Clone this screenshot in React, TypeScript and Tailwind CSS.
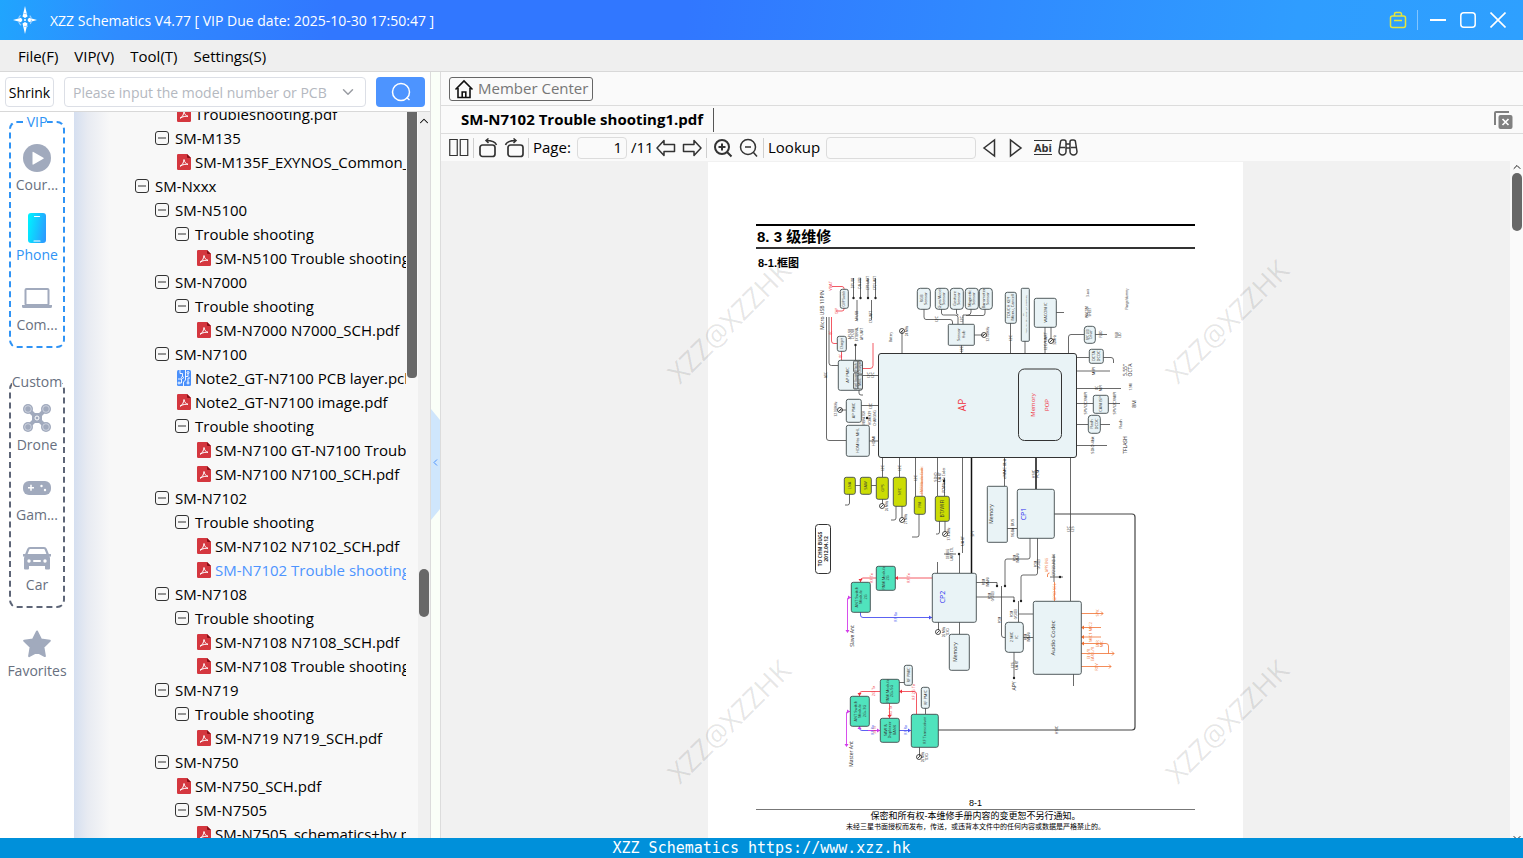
import type { ReactNode } from 'react'
import { ChevronDown, ChevronUp } from 'lucide-react'

type Kind = 'folder' | 'pdf' | 'pcb'

const INDENT = ['pl-[61px]', 'pl-[81px]', 'pl-[101px]', 'pl-[121px]']

const TREE: { depth: number; kind: Kind; label: string; active?: boolean }[] = [
  { depth: 2, kind: 'pdf', label: 'Troubleshooting.pdf' },
  { depth: 1, kind: 'folder', label: 'SM-M135' },
  { depth: 2, kind: 'pdf', label: 'SM-M135F_EXYNOS_Common_SCH.pdf' },
  { depth: 0, kind: 'folder', label: 'SM-Nxxx' },
  { depth: 1, kind: 'folder', label: 'SM-N5100' },
  { depth: 2, kind: 'folder', label: 'Trouble shooting' },
  { depth: 3, kind: 'pdf', label: 'SM-N5100 Trouble shooting.pdf' },
  { depth: 1, kind: 'folder', label: 'SM-N7000' },
  { depth: 2, kind: 'folder', label: 'Trouble shooting' },
  { depth: 3, kind: 'pdf', label: 'SM-N7000 N7000_SCH.pdf' },
  { depth: 1, kind: 'folder', label: 'SM-N7100' },
  { depth: 2, kind: 'pcb', label: 'Note2_GT-N7100 PCB layer.pcb' },
  { depth: 2, kind: 'pdf', label: 'Note2_GT-N7100 image.pdf' },
  { depth: 2, kind: 'folder', label: 'Trouble shooting' },
  { depth: 3, kind: 'pdf', label: 'SM-N7100 GT-N7100 Trouble shooting.pdf' },
  { depth: 3, kind: 'pdf', label: 'SM-N7100 N7100_SCH.pdf' },
  { depth: 1, kind: 'folder', label: 'SM-N7102' },
  { depth: 2, kind: 'folder', label: 'Trouble shooting' },
  { depth: 3, kind: 'pdf', label: 'SM-N7102 N7102_SCH.pdf' },
  { depth: 3, kind: 'pdf', label: 'SM-N7102 Trouble shooting1.pdf', active: true },
  { depth: 1, kind: 'folder', label: 'SM-N7108' },
  { depth: 2, kind: 'folder', label: 'Trouble shooting' },
  { depth: 3, kind: 'pdf', label: 'SM-N7108 N7108_SCH.pdf' },
  { depth: 3, kind: 'pdf', label: 'SM-N7108 Trouble shooting.pdf' },
  { depth: 1, kind: 'folder', label: 'SM-N719' },
  { depth: 2, kind: 'folder', label: 'Trouble shooting' },
  { depth: 3, kind: 'pdf', label: 'SM-N719 N719_SCH.pdf' },
  { depth: 1, kind: 'folder', label: 'SM-N750' },
  { depth: 2, kind: 'pdf', label: 'SM-N750_SCH.pdf' },
  { depth: 2, kind: 'folder', label: 'SM-N7505' },
  { depth: 3, kind: 'pdf', label: 'SM-N7505_schematics+by.pdf' },
]

/* ---------- icons ---------- */

function TreeIcon({ kind }: { kind: Kind }) {
  if (kind === 'folder') {
    return (
      <svg width="14" height="14" viewBox="0 0 14 14" fill="none" stroke="#333">
        <rect x="0.5" y="0.5" width="13" height="13" rx="2.5" />
        <path d="M3 7h8" />
      </svg>
    )
  }
  if (kind === 'pcb') {
    return (
      <svg className="ml-0.5" width="14" height="16" viewBox="0 0 14 16">
        <rect width="14" height="16" rx="1.5" fill="#4a90fb" />
        <g fill="none" stroke="#fff" strokeWidth="0.9">
          <path d="M3 0v3.5h2.5V7M1 9h3.500v4H2M8.500 0v10l-2 2v4M11 2v4.500H8.500M13 8h-2v5" />
          <circle cx="5.500" cy="7.500" r="1" fill="#4a90fb" />
          <circle cx="11" cy="2.500" r="1" fill="#4a90fb" />
          <circle cx="11" cy="13" r="1" fill="#4a90fb" />
          <circle cx="2" cy="13" r="1" fill="#4a90fb" />
        </g>
      </svg>
    )
  }
  return (
    <svg className="ml-0.5" width="14" height="16" viewBox="0 0 14 16">
      <path d="M1.200 0H10l4 4v10.800a1.200 1.200 0 0 1-1.200 1.200H1.200A1.200 1.200 0 0 1 0 14.800V1.200A1.200 1.200 0 0 1 1.200 0z" fill="#d4373f" />
      <path d="M10 0l4 4h-3a1 1 0 0 1-1-1z" fill="#8a0f17" />
      <path d="M3 12.200c1.800-.7 3.800-3.300 4-6.700.5 2.600 1.800 4.400 4 4.800-2.500-.2-5 .1-8 1.900z" fill="none" stroke="#fff" strokeWidth="1" />
    </svg>
  )
}

const PlayIcon = (
  <svg width="28" height="28" viewBox="0 0 28 28">
    <circle cx="14" cy="14" r="14" fill="#a1aabd" />
    <path d="M9.500 8.500v11.500a.6.6 0 0 0 .9.500l10-5.700a.6.6 0 0 0 0-1.100l-10-5.700a.6.6 0 0 0-.9.500z" fill="#fff" />
  </svg>
)

const PhoneIcon = (
  <svg width="18" height="30" viewBox="0 0 18 30">
    <defs>
      <linearGradient id="phone" x1="0" x2="1" y1="0.300" y2="0.600">
        <stop offset="0" stopColor="#00f0ff" />
        <stop offset="1" stopColor="#2b9cff" />
      </linearGradient>
    </defs>
    <rect width="18" height="30" rx="3" fill="url(#phone)" />
    <path d="M6.500 3.500h5M6 28h6" stroke="#fff" strokeWidth="1.200" strokeLinecap="round" />
  </svg>
)

const LaptopIcon = (
  <svg width="30" height="20" viewBox="0 0 30 20">
    <rect x="3.500" y="1" width="23" height="16" rx="1" fill="none" stroke="#a1aabd" strokeWidth="2" />
    <path d="M0 17h12.500v1h5v-1H30v1.500a1.500 1.500 0 0 1-1.500 1.500h-27A1.500 1.500 0 0 1 0 18.500z" fill="#a1aabd" />
  </svg>
)

const DroneIcon = (
  <svg width="28" height="28" viewBox="0 0 28 28">
    <path d="M5 5l18 18M23 5L5 23" stroke="#a1aabd" strokeWidth="4" />
    <rect x="9" y="9" width="10" height="10" rx="2.500" fill="#a1aabd" />
    {[5, 23].map((cx) =>
      [5, 23].map((cy) => (
        <g key={cx * 100 + cy}>
          <circle cx={cx} cy={cy} r="5" fill="#a1aabd" />
          <circle cx={cx} cy={cy} r="3.300" fill="none" stroke="#e8ebf1" strokeWidth="0.600" />
        </g>
      )),
    )}
    <circle cx="14" cy="14" r="2" fill="none" stroke="#fff" />
  </svg>
)

const GamepadIcon = (
  <svg width="28" height="14" viewBox="0 0 28 14">
    <rect width="28" height="14" rx="6" fill="#a1aabd" />
    <path d="M8 3.800v6M5 6.800h6" stroke="#fff" strokeWidth="1.500" />
    <circle cx="18.500" cy="5" r="1.200" fill="#fff" />
    <circle cx="22" cy="9" r="1.200" fill="#fff" />
  </svg>
)

const CarIcon = (
  <svg width="28" height="24" viewBox="0 0 28 24">
    <path d="M7 2h14a2 2 0 0 1 1.800 1.300L25 9H3l2.200-5.700A2 2 0 0 1 7 2z" fill="none" stroke="#a1aabd" strokeWidth="2.200" />
    <path d="M0 8h3l1 1h20l1-1h3v2.500h-1.500L27 12v10.500a1 1 0 0 1-1 1h-3a1 1 0 0 1-1-1V20H6v2.500a1 1 0 0 1-1 1H2a1 1 0 0 1-1-1V12l.5-1.500H0z" fill="#a1aabd" />
    <circle cx="6" cy="15" r="1.700" fill="#fff" />
    <circle cx="22" cy="15" r="1.700" fill="#fff" />
    <rect x="10" y="14" width="8" height="2" rx="1" fill="#fff" />
  </svg>
)

const StarIcon = (
  <svg width="28" height="28" viewBox="0 0 28 28">
    <path d="M14 1.500l4 8 8.800 1.300-6.400 6.300 1.500 9L14 21.800l-7.900 4.300 1.500-9L1.200 10.800 10 9.500z" fill="#a1aabd" stroke="#a1aabd" strokeWidth="2" strokeLinejoin="round" />
  </svg>
)

function SideItem({ icon, label, active }: { icon: ReactNode; label: string; active?: boolean }) {
  return (
    <button type="button" className={`flex h-[70px] w-full flex-col items-center whitespace-nowrap ${active ? 'text-[#2f93f5]' : 'text-[#687080]'}`}>
      <span className="flex h-11 shrink-0 items-center">{icon}</span>
      <span className="text-[14px] leading-[10px]">{label}</span>
    </button>
  )
}

/* Toolbar icon button */
function Tool({ label, children }: { label: string; children: ReactNode }) {
  return (
    <button type="button" aria-label={label} className="flex h-6 w-5 shrink-0 items-center justify-center">
      <svg width="20" height="20" viewBox="0 0 20 20" fill="none" stroke="#333" strokeWidth="1.500">
        {children}
      </svg>
    </button>
  )
}

function Divider() {
  return <span className="h-5 w-px shrink-0 bg-[#cfcfcf]" />
}

/* ---------- block diagram ---------- */

// Vertical label, reads bottom to top
function V({ x, y, s = 4, c = '#333', b, children }: { x: number; y: number; s?: number; c?: string; b?: boolean; children: ReactNode }) {
  return (
    <text transform={`translate(${x} ${y}) rotate(-90)`} fontSize={s} fill={c} fontWeight={b ? 700 : 400} textAnchor="middle" dominantBaseline="central">
      {children}
    </text>
  )
}

const BLUE = '#e9f3f6'
const LIME = '#cbdc04'
const TEAL = '#50e3bd'

// x, y, width, height, fill, radius, text lines, text size
const BLOCKS: [number, number, number, number, string, number, string[], number][] = [
  [840, 289, 8, 19, BLUE, 2, ['OVP Switch'], 4],
  [837, 336, 9, 15, BLUE, 2, ['Charger'], 4],
  [838, 360, 24, 30, BLUE, 2, [], 4],
  [846, 399, 15, 23, BLUE, 2, ['AP PMIC'], 5],
  [846, 425, 23, 31, BLUE, 2, ['HDMI to MHL'], 5],
  [917, 288, 13, 21, BLUE, 3, ['RGB', 'Sensor'], 5],
  [935, 288, 13, 21, BLUE, 3, ['Gyro/Accel', 'Sensor'], 5],
  [950, 288, 13, 21, BLUE, 3, ['Gesture', 'Sensor'], 5],
  [965, 288, 13, 21, BLUE, 3, ['Magnetic', 'Sensor'], 5],
  [979, 288, 13, 21, BLUE, 3, ['Barometer', 'Sensor'], 5],
  [948, 324, 26, 21, BLUE, 1, ['Sensor', 'Hub'], 5],
  [1005, 292, 11, 31, BLUE, 2, ['TOUCH KEY', '(Menu, Cancel)'], 5],
  [1021, 288, 8, 53, BLUE, 1, ['KEY', 'Power, Volume up/down (AP, MAX77686)'], 3],
  [1034, 298, 22, 29, BLUE, 2, ['WACOM IC'], 5],
  [1084, 326, 11, 17, BLUE, 3, ['SPC LED', 'Driver'], 4],
  [1089, 349, 14, 14, BLUE, 2, ['DCTA', 'DCDC'], 5],
  [1093, 395, 15, 18, BLUE, 2, ['CAM ISP'], 5],
  [1088, 415, 12, 18, BLUE, 3, ['Flash', 'DCDC'], 5],
  [844, 477, 11, 17, LIME, 2, ['LNA'], 5],
  [860, 477, 11, 17, LIME, 2, ['SAW'], 5],
  [876, 477, 12, 22, LIME, 2, ['GPS'], 5],
  [893, 477, 13, 29, LIME, 2, ['NFC'], 5],
  [914, 496, 11, 18, LIME, 2, ['FM'], 5],
  [935, 496, 14, 25, LIME, 2, ['BT/WIFI'], 6],
  [987, 486, 20, 56, BLUE, 1, [], 5],
  [1017, 489, 37, 49, BLUE, 2, [], 5],
  [932, 573, 44, 49, BLUE, 2, [], 5],
  [949, 634, 20, 36, BLUE, 2, [], 5],
  [1005, 622, 18, 30, BLUE, 3, ['2 MIC', 'IC'], 5],
  [1033, 601, 48, 73, BLUE, 2, [], 5],
  [876, 566, 19, 24, TEAL, 2, ['PAM Module', '2G'], 5],
  [851, 582, 19, 30, TEAL, 2, ['ANT Switch', 'Module', '2G'], 5],
  [880, 679, 19, 24, TEAL, 2, ['PAM Module', '2G+5G'], 5],
  [850, 696, 19, 30, TEAL, 2, ['ANT Switch', 'Module', '2G+3G'], 5],
  [880, 718, 19, 24, TEAL, 2, ['SAW &', 'Duplexer', 'BANK'], 5],
  [911, 714, 27, 33, TEAL, 2, ['RF Transceiver'], 5],
  [904, 665, 8, 20, BLUE, 2, ['RF PMIC'], 5],
  [921, 687, 8, 21, BLUE, 2, ['RF PMIC'], 5],
]

// loose labels: x, y, text, size, colour
const LABELS: [number, number, string, number, string][] = [
  [822, 310, 'Micro USB 11PIN', 5, '#222'],
  [830, 286, 'VBAT', 4, '#f0303c'],
  [837, 311, 'OVP', 3, '#f0303c'],
  [853, 283, 'DP USB', 3, '#222'],
  [860, 283, 'DN USB', 3, '#222'],
  [868, 283, 'CP1 UART', 3, '#222'],
  [875, 283, 'CP2 UART', 3, '#222'],
  [857, 316, 'AP USB', 3, '#222'],
  [871, 317, 'CP UART', 3, '#222'],
  [850, 334, 'AP USB', 3, '#222'],
  [853, 334, 'CP USB', 3, '#222'],
  [857, 334, 'EXTERNAL', 3, '#222'],
  [862, 334, 'AP UART', 3, '#222'],
  [847, 375, 'AP PMIC', 4, '#333'],
  [831, 333, 'I2C', 3, '#f0303c'],
  [841, 356, 'I2C', 3, '#f0303c'],
  [868, 375, 'I2C', 4, '#222'],
  [872, 375, 'I2C', 4, '#222'],
  [870, 406, 'I2C', 4, '#222'],
  [826, 375, 'ADC', 3, '#222'],
  [836, 409, '32.768KHz', 3, '#222'],
  [864, 418, 'VIBRATOR', 3, '#222'],
  [870, 418, 'HOMEKEY', 3, '#222'],
  [875, 418, 'CHARGING', 3, '#222'],
  [873, 441, 'HDMI', 4, '#222'],
  [891, 337, 'Battery', 3, '#222'],
  [907, 331, '24 MHz', 3, '#222'],
  [936, 319, 'I2C', 4, '#222'],
  [961, 319, 'I2C', 4, '#222'],
  [961, 349, 'I2C', 4, '#222'],
  [988, 334, '32.768KHz', 3, '#222'],
  [1010, 338, 'I2C', 4, '#222'],
  [1045, 341, 'I2C/UART', 4, '#222'],
  [1055, 340, '32MHz', 3, '#222'],
  [1088, 293, '3-axis', 3, '#222'],
  [1087, 312, 'WACOM', 3, '#222'],
  [1090, 312, 'SHEET', 3, '#222'],
  [1127, 299, 'Flange/dummy', 3, '#222'],
  [1101, 334, 'FLED', 3, '#222'],
  [1117, 335, 'RGB', 3, '#222'],
  [1120, 335, 'LED', 3, '#222'],
  [1093, 371, 'MIPI', 4, '#222'],
  [1125, 370, '5.55"', 5, '#222'],
  [1130, 370, 'OCTA', 5, '#222'],
  [1097, 388, 'I2C', 3, '#222'],
  [1101, 388, 'MIPI', 3, '#222'],
  [1131, 387, '1.9M', 3, '#222'],
  [1085, 403, 'SPI/I2C/MIPI', 4, '#222'],
  [1114, 403, 'SPI/I2C/MIPI', 4, '#222'],
  [1134, 404, '8M', 5, '#222'],
  [1120, 424, 'Flash', 4, '#222'],
  [1092, 445, 'SDIO 4bit', 4, '#222'],
  [1125, 445, 'TFLASH', 5, '#222'],
  [882, 468, 'I2C', 4, '#222'],
  [899, 468, 'I2C', 4, '#222'],
  [915, 478, 'I2C', 4, '#222'],
  [922, 480, 'FM RX/Audio Codec', 3, '#e8702a'],
  [935, 477, 'SDIO', 4, '#222'],
  [939, 477, 'UART', 4, '#222'],
  [944, 480, 'PCM/Audio Codec', 3, '#222'],
  [887, 506, '26 MHz', 3, '#222'],
  [906, 519, '27 MHz', 3, '#222'],
  [949, 534, '37.4 MHz', 3, '#222'],
  [962, 541, 'UART', 4, '#222'],
  [972, 534, 'SPI', 4, '#222'],
  [948, 554, 'DEBUG', 3, '#222'],
  [952, 554, 'UART CTL', 3, '#222'],
  [1004, 469, 'eMMC 8bit', 4, '#222'],
  [1033, 474, 'HSIC', 4, '#222'],
  [1037, 474, 'PCM', 4, '#222'],
  [1012, 528, '16Bit BUS', 4, '#222'],
  [1068, 529, 'I2C', 4, '#222'],
  [1072, 529, 'I2S', 4, '#222'],
  [1015, 558, 'PCM', 3, '#222'],
  [1018, 558, '(MAIN)', 3, '#222'],
  [1036, 564, 'PCM', 3, '#222'],
  [1039, 564, '(VOICE)', 3, '#222'],
  [984, 582, 'PCM', 3, '#222'],
  [988, 582, '(MAIN)', 3, '#222'],
  [990, 596, 'PCM', 3, '#222'],
  [993, 596, '(VOICE)', 3, '#222'],
  [1047, 565, 'APPS ENG', 3, '#f07030'],
  [1054, 565, 'CP2 SOUND EN', 3, '#222'],
  [1054, 592, 'GPIO SEL', 4, '#f07030'],
  [1000, 620, 'PCM', 3, '#222'],
  [1012, 614, 'PCM', 3, '#222'],
  [1016, 614, '(VOICE)', 3, '#222'],
  [1026, 637, 'PCM', 3, '#222'],
  [1029, 637, '(MAIN)', 3, '#222'],
  [1012, 665, 'I2S', 4, '#222'],
  [1016, 665, 'UART', 4, '#222'],
  [1014, 686, 'APY', 5, '#222'],
  [1097, 613, 'SPK', 4, '#f07030'],
  [1090, 632, 'MIC1 MIC2', 4, '#f07030'],
  [1097, 644, 'EAR', 4, '#f07030'],
  [1101, 644, 'MIC', 4, '#f07030'],
  [1088, 654, 'EJ L/R', 4, '#f07030'],
  [1092, 654, 'EAR L/R', 4, '#f07030'],
  [1096, 667, 'RCV', 4, '#f07030'],
  [871, 578, 'RF Tx', 4, '#f0303c'],
  [908, 578, 'RF Tx', 4, '#f0303c'],
  [895, 617, 'RF Rx', 4, '#4050f0'],
  [852, 636, 'Slave Ant', 5, '#222'],
  [851, 754, 'Master Ant', 5, '#222'],
  [944, 632, '26 MHz', 3, '#222'],
  [948, 632, 'TCXO', 3, '#222'],
  [873, 691, '2G Tx', 4, '#f0303c'],
  [890, 711, '3G Tx', 4, '#f0303c'],
  [913, 692, 'RF 2G Tx', 4, '#f0303c'],
  [872, 730, 'RF Rx', 4, '#4050f0'],
  [875, 730, '3G Tx', 3, '#f0303c'],
  [905, 730, 'RF Rx', 4, '#4050f0'],
  [923, 757, '26 MHz', 3, '#222'],
  [927, 757, 'TCXO', 3, '#222'],
  [1056, 730, 'HSIC', 4, '#222'],
]

function Diagram() {
  return (
    <svg viewBox="756 272 439 518" className="block w-full" fontFamily="'Open Sans', 'Noto Sans', sans-serif">
      {/* wiring */}
      <g fill="none" stroke="#444" strokeWidth="0.8">
        <path d="M826.500 317V438q0 2.500 2.500 2.500H846M829 317V363q0 2.500 2.500 2.500H838M862 375.500H879M861 405.500H879M869 441H879" />
        <path d="M853.500 278V298M860.500 278V298M868 278V298M875.500 278V298M857 300V320M871.500 300V320M855.500 344V360M840 410H846M859 390V393q0 2 2 2H863" />
        <path d="M902 331V353M924 309V317q0 2.500 2 2.500H950q2.500 0 2.500 2.500V324M941.500 309V313q0 2 2 2H955q3 0 3 2.500V324M956.500 309V313q0 2 2 2M971 309V312q0 3-3 3H963V324M985 309V313q0 2.500-2 2.500H966M961.500 345V353M974 335H984" />
        <path d="M1010.500 323V353M1025 341V353M1045 327V353M1051 327V339M1056 312.500H1064M1068.500 353V337q0-2.500 2.500-2.500H1084M1095 334.500H1107M1077 357.500H1089M1103 357.500H1111q2.500 0 2.500 2.500V363M1077 371H1110M1077 388.500H1121M1077 403.500H1093M1108 403.500H1120M1077 424.500H1088M1100 424.500H1110M1077 445.500H1107" />
        <path d="M882.500 458V477M899.500 458V477M915.500 458V496M937.500 458V496M944.500 478V496M855 485.500H860M871 485.500H876M849.500 494V503q0 2-2 2H845M882.500 499V504M896 506V518q0 2-2 2H891M902 506V518M919 514V535q0 2-2 2H912M939.500 521V532q0 2-2 2H936M945 521V532" />
        <path d="M962.500 458V553M1004.500 458V486M1070.500 458V601M937.500 562V573M959.500 554V573M959.500 622V634M938.500 622V630M944 554H956M1007 528.500H1017" />
        <path d="M1030 538V557q0 2-2 2H1007q-2 0-2 2V586M1037.500 538V573q0 2-2 2H1023q-2 0-2 2V601M976 582.500H997V586M976 597H1014V601M1001.500 586V635q0 2.500 2.500 2.500H1005M1018.500 601V622M1018.500 614H1033M1023 637.500H1033M1014 652V678M1073.500 674V686M1054 555V582M1050 577H1063" />
        <path d="M912 682.500H899M925.500 708V714M919.500 747V756" />
        <path d="M1054 514H1132q3 0 3 3V727q0 3-3 3H938" strokeWidth="1.200" />
      </g>
      <g fill="none" stroke="#111" strokeWidth="1.500">
        <path d="M971.500 458V573M1036 458V489" />
      </g>
      <g fill="none" stroke="#f0303c" strokeWidth="0.800">
        <path d="M831.500 317V341q0 2.500 2.500 2.500H837M841.500 351V360M862 368.500H870q3 0 3-3V343M832 286.500H842q2 0 2 2V289M844 308V309q0 2-2 2H836" />
        <path d="M932 578H895M876 578H863q-2.500 0-2.500 2.500V582M880 691.500H862q-2.500 0-2.500 2.500V696M889.500 703V718M916.500 714V694q0-2.500-2.500-2.500H899" />
      </g>
      <g fill="none" stroke="#4a50f0" strokeWidth="0.900">
        <path d="M860.500 612V615q0 2.500 2.500 2.500H932M899 730.500H911M880 730.500H862q-2.500 0-2.500-2.500V726" />
      </g>
      <g fill="none" stroke="#d23bea" strokeWidth="0.900">
        <path d="M851 597.500H849q-1.500 0-1.500 1.500V632M850 711.500H848q-1.500 0-1.500 1.500V746M880 730.500H868" />
      </g>
      <g fill="none" stroke="#f07030" strokeWidth="0.800">
        <path d="M1081 613.500H1103M1081 627.500H1101M1081 637H1101M1081 643.500H1106q2.500 0 2.500 2.500V653.500M1081 653.500H1114M1081 666.500H1111M1054.500 582V601M1047.500 577v-2q0-2 2-2M922 468V496" />
        <path d="M1101 611.500l2 2-2 2M1112 651.500l2 2-2 2M1109 664.500l2 2-2 2" />
      </g>

      {/* arrow heads and dots */}
      <g fill="#222">
        {[[853.5, 298], [860.5, 298], [868, 298], [875.5, 298], [855.5, 345], [997, 586], [1005, 586], [1014, 601], [1021, 601], [1014, 678], [944, 481], [867, 418], [959, 554], [1060, 577]].map(([x, y]) => (
          <circle key={`${x}-${y}`} cx={x} cy={y} r="1.200" />
        ))}
      </g>
      <g fill="#f0303c">
        <path d="M895 578l3-2v4zM860.500 582l-2-3h4zM859.500 696l-2-3h4zM899 691.500l3-2v4zM889.500 718l-2-3h4z" />
        <path d="M932 617.500l-3-2v4zM911 730.500l-3-2v4z" fill="#4a50f0" />
        <path d="M847.500 633l-2-3h4zM846.500 747l-2-3h4zM851 597.500l-3-2v4zM850 711.500l-3-2v4zM859.500 726l-2 3h4zM880 730.500l-3-2v4z" fill="#d23bea" />
        <path d="M1081 627.500l3-2v4zM1081 637l3-2v4zM1081 643.500l3-2v4z" fill="#f07030" />
      </g>
      {/* clock sources */}
      <g fill="none" stroke="#222" strokeWidth="0.800">
        {[[902, 331], [984, 335], [1051, 341], [840, 410], [882, 506], [902, 520], [945, 534], [938, 632], [919, 757]].map(([x, y]) => (
          <g key={`${x}-${y}`}>
            <circle cx={x} cy={y} r="2.500" />
            <path d={`M${x - 1.5} ${y + 1.5}l3-3`} />
          </g>
        ))}
      </g>

      {/* blocks */}
      {BLOCKS.map(([x, y, w, h, fill, r, lines, size]) => (
        <g key={`${x}-${y}`}>
          <rect x={x + 0.3} y={y + 0.3} width={w} height={h} rx={r} fill={fill} stroke="#3f4a4c" strokeWidth="0.900" />
          {lines.map((line, i) => (
            <V key={line} x={x + w / 2 + (i - (lines.length - 1) / 2) * (size - 0.5)} y={y + h / 2} s={size - 1}>
              {line}
            </V>
          ))}
        </g>
      ))}
      <g fill="#dbe5e8" stroke="#333" strokeWidth="0.700">
        <rect x="853.500" y="361" width="4.500" height="11" rx="1" />
        <rect x="858" y="361" width="4.500" height="13" rx="1" />
        <rect x="853.500" y="373" width="4.500" height="16" rx="1" />
        <rect x="858" y="375" width="4.500" height="14" rx="1" />
      </g>
      <V x={856} y={381} s={3}>Fuel Gauge</V>
      <V x={856} y={367} s={3}>Flash</V>
      <V x={860} y={367} s={3}>Charger</V>
      <V x={860} y={382} s={3}>MUIC</V>

      {/* processor */}
      <rect x="878.500" y="353.500" width="198" height="104" rx="2.500" fill={BLUE} stroke="#333" />
      <rect x="1018.500" y="369" width="43" height="71.500" rx="6" fill="none" stroke="#333" />
      <V x={962} y={405} s={10} c="#f0303c">AP</V>
      <V x={1033} y={405} s={6} c="#f0303c">Memory</V>
      <V x={1047} y={405} s={6} c="#f0303c">POP</V>
      <V x={1023} y={514} s={7} c="#2b2bf0">CP1</V>
      <V x={942} y={597} s={7} c="#2b2bf0">CP2</V>
      <V x={991} y={514} s={5}>Memory</V>
      <V x={955} y={652} s={5}>Memory</V>
      <V x={1053} y={638} s={6}>Audio Codec</V>

      <rect x="815.500" y="524.500" width="15" height="49" rx="3" fill="#fff" stroke="#333" />
      <V x={820} y={549} s={5} b>TO CHM BUGS</V>
      <V x={826} y={549} s={5} b>2012.04.12</V>

      {LABELS.map(([x, y, text, size, colour]) => (
        <V key={`${x}-${y}-${text}`} x={x} y={y} s={size} c={colour}>
          {text}
        </V>
      ))}
    </svg>
  )
}

/* ---------- sections ---------- */

function TitleBar() {
  return (
    <header className="flex h-10 shrink-0 items-center bg-[linear-gradient(100deg,#20a5fe_0%,#2f8cff_8%,#3177ff_22%,#3177ff_45%,#2f9dff_85%,#2ea0ff_100%)] pl-3 pr-[17px] text-white">
      <svg width="26" height="28" viewBox="0 0 26 28" fill="#fff">
        <path d="M13 0l2.500 10.500-2.500 1.500-2.500-1.500zM13 28l2.500-10.500L13 16l-2.500 1.500z" />
        <path d="M1 14l8-2.200L10.500 14 9 16.200zM25 14l-8-2.200-1.500 2.200 1.500 2.200z" />
        <circle cx="13" cy="14" r="6.500" fill="none" stroke="#9fd2ff" strokeWidth="1.200" strokeDasharray="4 3" />
        <circle cx="13" cy="14" r="1" />
      </svg>
      <h1 className="ml-3 text-[14px]">XZZ Schematics V4.77 [ VIP Due date: 2025-10-30 17:50:47 ]</h1>
      <div className="ml-auto flex items-center">
        <button type="button" aria-label="Toolbox">
          <svg width="18" height="18" viewBox="0 0 18 18" fill="none" stroke="#e6e63c" strokeWidth="1.500">
            <rect x="1.500" y="5" width="15" height="11.500" rx="2" />
            <path d="M5.500 5V3a1.500 1.500 0 0 1 1.500-1.500h4A1.500 1.500 0 0 1 12.500 3v2M5 9.500h8" />
          </svg>
        </button>
        <span className="ml-2.5 h-5 w-px bg-white/40" />
        <button type="button" aria-label="Minimize" className="ml-3">
          <svg width="16" height="18" viewBox="0 0 16 18" stroke="#fff" strokeWidth="2">
            <path d="M0 9h16" />
          </svg>
        </button>
        <button type="button" aria-label="Maximize" className="ml-3.5">
          <svg width="16" height="16" viewBox="0 0 16 16" fill="none" stroke="#fff" strokeWidth="1.500">
            <rect x="0.800" y="0.800" width="14.400" height="14.400" rx="3" />
          </svg>
        </button>
        <button type="button" aria-label="Close" className="ml-3.5">
          <svg width="16" height="16" viewBox="0 0 16 16" stroke="#fff" strokeWidth="1.600">
            <path d="M0.500 0.500l15 15M15.500 0.500l-15 15" />
          </svg>
        </button>
      </div>
    </header>
  )
}

function LeftPanel() {
  return (
    <aside className="flex w-[431px] shrink-0 flex-col border-r border-[#dcdcdc] bg-white">
      <div className="flex h-10 shrink-0 items-center border-b border-[#d8d8d8] px-[5px]">
        <button type="button" className="h-[30px] w-[49px] rounded border border-[#dcdfe6] bg-white pt-px text-[14px]">Shrink</button>
        <div className="ml-2.5 flex h-[30px] w-[302px] items-center rounded border border-[#dcdfe6] px-2">
          <input aria-label="Model number" placeholder="Please input the model number or PCB" className="min-w-0 flex-1 pt-px text-[14px] outline-none placeholder:text-[#b4b8c0]" />
          <ChevronDown size={18} strokeWidth={2} color="#9a9da3" className="shrink-0" />
        </div>
        <button type="button" aria-label="Search" className="ml-2.5 flex h-[30px] w-[49px] items-center justify-center rounded bg-[#4d94ff]">
          <svg width="20" height="20" viewBox="0 0 20 20" fill="none" stroke="#fff" strokeWidth="1.500">
            <circle cx="10" cy="10" r="8.500" />
            <path d="M15.500 15.500l3 2.500" />
          </svg>
        </button>
      </div>

      <div className="flex min-h-0 flex-1">
        <nav className="flex w-[74px] shrink-0 flex-col items-center overflow-hidden">
          <fieldset className="w-14 shrink-0 rounded-lg border-2 border-dashed border-[#2f93f5]">
            <legend className="mx-auto text-[14px] leading-5 text-[#2f93f5]">VIP</legend>
            <div className="flex flex-col pt-1">
              <SideItem icon={PlayIcon} label="Cour..." />
              <SideItem icon={PhoneIcon} label="Phone" active />
              <SideItem icon={LaptopIcon} label="Com..." />
            </div>
          </fieldset>
          <fieldset className="mt-6 w-14 shrink-0 rounded-lg border-2 border-dashed border-[#5d6577]">
            <legend className="mx-auto text-[14px] leading-5 text-[#687080]">Custom</legend>
            <div className="flex flex-col pt-1">
              <SideItem icon={DroneIcon} label="Drone" />
              <SideItem icon={GamepadIcon} label="Gam..." />
              <SideItem icon={CarIcon} label="Car" />
            </div>
          </fieldset>
          <div className="mt-3.5 w-full">
            <SideItem icon={StarIcon} label="Favorites" />
          </div>
        </nav>

        <div className="min-w-0 flex-1 overflow-hidden bg-[linear-gradient(90deg,#d5dff0_0px,#e8ebf2_14px,#f8f8f8_36px)]">
          <ul className="-mt-2.5">
            {TREE.map((row, i) => (
              <li key={i}>
                <button type="button" className={`flex h-6 items-center whitespace-nowrap text-[15px] ${INDENT[row.depth]} ${row.active ? 'text-[#4d94ff]' : 'text-black'}`}>
                  <span className="w-5 shrink-0">
                    <TreeIcon kind={row.kind} />
                  </span>
                  {row.label}
                </button>
              </li>
            ))}
          </ul>
        </div>
        <div className="w-3 shrink-0 bg-[#f8f8f8] px-px">
          <div className="h-[266px] rounded-b bg-[#686868]" />
        </div>
        <div className="flex w-3 shrink-0 flex-col items-center bg-[#f0f0f0] pt-0.5">
          <ChevronUp size={14} strokeWidth={1.75} className="shrink-0" />
          <div className="mt-[441px] h-12 w-2.5 rounded-full bg-[#686868]" />
        </div>
      </div>
    </aside>
  )
}

function Toolbar() {
  return (
    <div className="flex h-[27px] shrink-0 items-center whitespace-nowrap pl-2 text-[15px]">
      <Tool label="Two pages">
        <path d="M.75 1.500h7.500v16H.75zM11.250 1.500h7.500v16h-7.500z" strokeWidth="1.200" />
      </Tool>
      <span className="w-1" />
      <Divider />
      <span className="w-1" />
      <Tool label="Rotate left">
        <rect x="2" y="7" width="15" height="11.500" rx="2.500" strokeWidth="1.700" />
        <path d="M18.500 7c-1-3-4-4.500-10.500-4.500M10.500.5L8 2.500l2.500 2.500" />
      </Tool>
      <span className="w-1.5" />
      <Tool label="Rotate right">
        <rect x="4" y="7" width="15" height="11.500" rx="2.500" strokeWidth="1.700" />
        <path d="M1.500 7c1-3 4-4.500 10.500-4.500M9.500.5L12 2.500 9.500 5" />
      </Tool>
      <span className="w-1" />
      <Divider />
      <label htmlFor="page" className="ml-1 w-11">Page:</label>
      <input id="page" defaultValue="1" className="h-[22px] w-[50px] rounded-sm border border-[#dcdcdc] bg-[#fafafa] pr-1 text-right outline-none" />
      <span className="ml-1 w-6">/11</span>
      <span className="w-px" />
      <Tool label="Previous page">
        <path d="M1 10l7-7.500V6.500h10.500v7H8v4z" strokeLinejoin="round" />
      </Tool>
      <span className="w-1.5" />
      <Tool label="Next page">
        <path d="M19 10l-7-7.500V6.500H1.500v7H12v4z" strokeLinejoin="round" />
      </Tool>
      <span className="w-1" />
      <Divider />
      <span className="w-1.5" />
      <Tool label="Zoom in">
        <circle cx="9" cy="9" r="7" strokeWidth="2" />
        <path d="M9 5.500v7M5.500 9h7M14 14l4.500 4.500" strokeWidth="2" />
      </Tool>
      <span className="w-1.5" />
      <Tool label="Zoom out">
        <circle cx="9" cy="9" r="7.500" />
        <path d="M6 9h6M14.500 14.500l3.500 4" />
      </Tool>
      <span className="w-1" />
      <Divider />
      <label htmlFor="lookup" className="ml-1 w-[58px]">Lookup</label>
      <input id="lookup" className="h-[22px] w-[150px] rounded-sm border border-[#dcdcdc] bg-[#fafafa] outline-none" />
      <span className="w-1" />
      <Tool label="Find previous">
        <path d="M14.500 2v16L4 10z" />
      </Tool>
      <span className="w-1.5" />
      <Tool label="Find next">
        <path d="M4.500 2v16L15 10z" />
      </Tool>
      <button type="button" className="ml-2 border-y border-[#333] text-[11px] font-bold leading-[13px] text-[#333]">Abi</button>
      <span className="w-1.5" />
      <Tool label="Search document">
        <path d="M8 13.500a3.500 3.500 0 1 1-7 0L2.500 4a2 2 0 0 1 2-2H6a2 2 0 0 1 2 2zM12 13.500a3.500 3.500 0 1 0 7 0L17.500 4a2 2 0 0 0-2-2H14a2 2 0 0 0-2 2zM8 6h4M8 10h4M2 9.500h5M13 9.500h5" />
      </Tool>
    </div>
  )
}

function Viewer() {
  return (
    <div className="flex min-h-0 flex-1">
      <div className="relative min-w-0 flex-1 overflow-hidden bg-[#f1f1f1] pt-px">
        <article className="mx-auto w-[535px] bg-white px-12 pt-[62px] font-['Liberation_Sans','Noto_Sans_CJK_SC',sans-serif] text-black">
          <h2 className="border-y-2 border-b-[#333] border-t-black pl-px text-[15px] font-bold leading-[21px]">8. 3 级维修</h2>
          <h3 className="mb-0.5 mt-2 pl-0.5 text-[11px] font-bold leading-[13px]">8-1.框图</h3>
          <Diagram />
          <div className="mt-2 border-b border-[#777] text-center text-[9px] leading-[11px]">8-1</div>
          <p className="mt-px text-center text-[9px] leading-[11px]">保密和所有权-本维修手册内容的变更恕不另行通知。</p>
          <p className="pb-8 text-center text-[7px] leading-[10px]">未经三星书面授权而发布，传送，或违背本文件中的任何内容或数据是严格禁止的。</p>
        </article>
        {/* watermark */}
        <div className="pointer-events-none absolute inset-0 overflow-hidden">
          <div className="mx-auto -mt-10 grid w-[1000px] auto-rows-[400px] grid-cols-2 place-items-center pl-1">
            {[0, 1, 2, 3].map((n) => (
              <span key={n} className="-rotate-45 text-[28px] text-black/10">XZZ@XZZHK</span>
            ))}
          </div>
        </div>
      </div>
      <div className="flex w-[13px] shrink-0 flex-col items-center">
        <ChevronUp size={12} strokeWidth={1.75} className="shrink-0" />
        <div className="h-[58px] w-2.5 rounded-full bg-[#686868]" />
        <ChevronDown size={12} strokeWidth={1.75} className="-mb-1.5 mt-auto shrink-0" />
      </div>
    </div>
  )
}

export default function App() {
  return (
    <div className="flex h-screen flex-col overflow-hidden bg-[#fafafa] font-['Open_Sans','Noto_Sans_CJK_SC',sans-serif] text-black">
      <TitleBar />

      <nav className="flex h-8 shrink-0 items-center gap-4 border-b border-[#d8d8d8] bg-[#efefef] pl-[18px] pt-0.5 text-[15px]">
        <button type="button">File(F)</button>
        <button type="button">VIP(V)</button>
        <button type="button">Tool(T)</button>
        <button type="button">Settings(S)</button>
      </nav>

      <div className="flex min-h-0 flex-1">
        <LeftPanel />

        {/* splitter */}
        <div className="flex w-[9px] shrink-0 flex-col items-center bg-[#fafff8] pt-[337px]">
          <button type="button" aria-label="Collapse panel">
            <svg width="9" height="111" viewBox="0 0 9 111">
              <path d="M0 0l9 11v89l-9 11z" fill="#cfe6fc" />
              <path d="M6 50.500L3 53.500l3 3" fill="none" stroke="#4d94ff" />
            </svg>
          </button>
        </div>

        <main className="flex min-w-0 flex-1 flex-col border-l border-[#dcdcdc]">
          <div className="flex h-[34px] shrink-0 items-center border-b border-[#dcdcdc] pl-2">
            <button type="button" className="flex h-6 items-center gap-1 whitespace-nowrap rounded-[3px] border border-[#666] px-1 text-[15px] text-[#777]">
              <svg className="shrink-0" width="20" height="20" viewBox="0 0 20 20" fill="none" stroke="#111" strokeWidth="1.600">
                <path d="M1.500 10.500L10 2l8.500 8.500M4 9v9.500h12V9M8.200 18v-5h3.600v5" />
              </svg>
              Member Center
            </button>
          </div>
          <div className="flex h-7 shrink-0 items-center border-b border-[#dcdcdc] pl-5 pr-2.5">
            <button type="button" className="flex h-6 items-center border-r border-[#555] pr-2.5 text-[15px] font-bold">SM-N7102 Trouble shooting1.pdf</button>
            <button type="button" aria-label="Close all tabs" className="ml-auto">
              <svg width="19" height="18" viewBox="0 0 19 18">
                <path d="M1 14V2a1 1 0 0 1 1-1h13" fill="none" stroke="#808080" strokeWidth="2" />
                <rect x="4.500" y="4" width="14" height="14" rx="2" fill="#808080" />
                <path d="M8.500 8l6 6M14.500 8l-6 6" stroke="#fff" strokeWidth="1.700" />
              </svg>
            </button>
          </div>
          <Toolbar />
          <Viewer />
        </main>
      </div>

      <footer className="flex h-5 shrink-0 items-center justify-center bg-[#0090da] font-['DejaVu_Sans_Mono',monospace] text-[15px] text-white">
        XZZ Schematics https://www.xzz.hk
      </footer>
    </div>
  )
}
